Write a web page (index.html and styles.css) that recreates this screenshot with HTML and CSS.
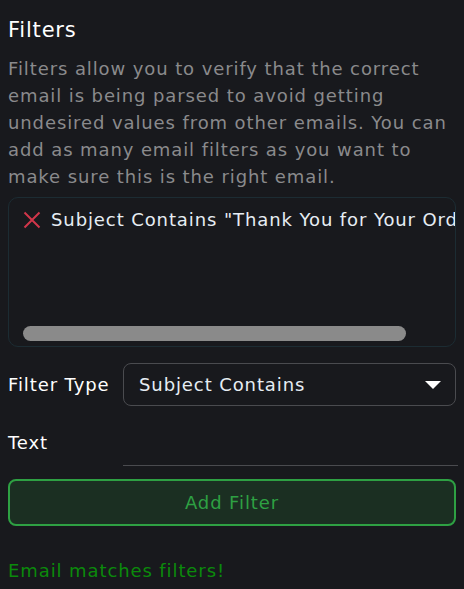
FILE: index.html
```html
<!DOCTYPE html>
<html lang="en">
<head>
    <meta charset="UTF-8">
    <meta name="viewport" content="width=device-width, initial-scale=1.0">
    <title>Filters</title>
    <link rel="stylesheet" href="styles.css">
</head>
<body>
    <div class="filters">
        <h2>Filters</h2>
        <p class="desc">Filters allow you to verify that the correct email is being parsed to avoid getting undesired values from other emails. You can add as many email filters as you want to make sure this is the right email.</p>

        <div class="filter-list">
            <div class="filter-item">
                <svg class="remove" width="18" height="18" viewBox="0 0 18 18">
                    <path d="M1.5 1.5 L16.5 16.5 M16.5 1.5 L1.5 16.5" stroke="#d0364a" stroke-width="2" fill="none"/>
                </svg>
                <span>Subject Contains "Thank You for Your Order"</span>
            </div>
            <div class="scroll-track"><div class="scroll-thumb"></div></div>
        </div>

        <div class="form-row">
            <label for="filterType">Filter Type</label>
            <div class="select">
                <span>Subject Contains</span>
                <svg width="16" height="8" viewBox="0 0 16 8"><path d="M0 0 H16 L8 8 Z" fill="#fff"/></svg>
            </div>
        </div>

        <div class="form-row text-row">
            <label for="filterText">Text</label>
            <input type="text" id="filterText">
        </div>

        <button class="add-btn">Add Filter</button>

        <p class="status">Email matches filters!</p>
    </div>
</body>
</html>
```

FILE: styles.css
```css
body {
    margin: 0;
    padding: 0 8px;
    background-color: #18191d;
    font-family: "DejaVu Sans", sans-serif;
    letter-spacing: 0.9px;
    color: #fff;
}
.filters {
    display: flex;
    flex-direction: column;
}
h2 {
    font-size: 21px;
    font-weight: 400;
    letter-spacing: 0.8px;
    margin: 15px 0 0;
    line-height: 30px;
}
.desc {
    color: #8a8a8c;
    font-size: 18px;
    line-height: 27px;
    margin: 10px 0 7px;
}
.filter-list {
    box-sizing: border-box;
    height: 150px;
    border: 1px solid #1c2c33;
    border-radius: 10px;
    display: flex;
    flex-direction: column;
    justify-content: space-between;
    overflow: hidden;
    padding: 11px 0 5px 14px;
}
.filter-item {
    display: flex;
    align-items: center;
    gap: 10px;
    white-space: nowrap;
    font-size: 18px;
    color: #e6edf3;
}
.remove {
    flex-shrink: 0;
}
.scroll-track {
    height: 15px;
}
.scroll-thumb {
    width: 383px;
    height: 15px;
    border-radius: 8px;
    background-color: #8a8a8a;
}
.form-row {
    display: flex;
    align-items: center;
    gap: 10px;
    margin-top: 16px;
}
.text-row {
    margin-top: 13px;
}
.form-row label {
    font-size: 18px;
    width: 105px;
    flex-shrink: 0;
    white-space: nowrap;
}
.select {
    flex: 1;
    height: 41px;
    border: 1px solid #4a4b4f;
    border-radius: 8px;
    display: flex;
    align-items: center;
    justify-content: space-between;
    padding: 0 14px 0 15px;
    font-size: 18px;
    color: #e6edf3;
}
input {
    flex: 1;
    height: 44px;
    background: transparent;
    border: none;
    border-bottom: 1px solid #4a4b4f;
    color: #fff;
    font: inherit;
    outline: none;
    margin-right: -2px;
}
.add-btn {
    margin-top: 13px;
    height: 47px;
    background-color: #1b2f22;
    border: 2px solid #2ea043;
    border-radius: 8px;
    color: #2ea043;
    font-family: inherit;
    letter-spacing: inherit;
    font-size: 18px;
}
.status {
    color: #0b8a0b;
    font-size: 18px;
    line-height: 27px;
    margin: 31px 0 0;
}
```
